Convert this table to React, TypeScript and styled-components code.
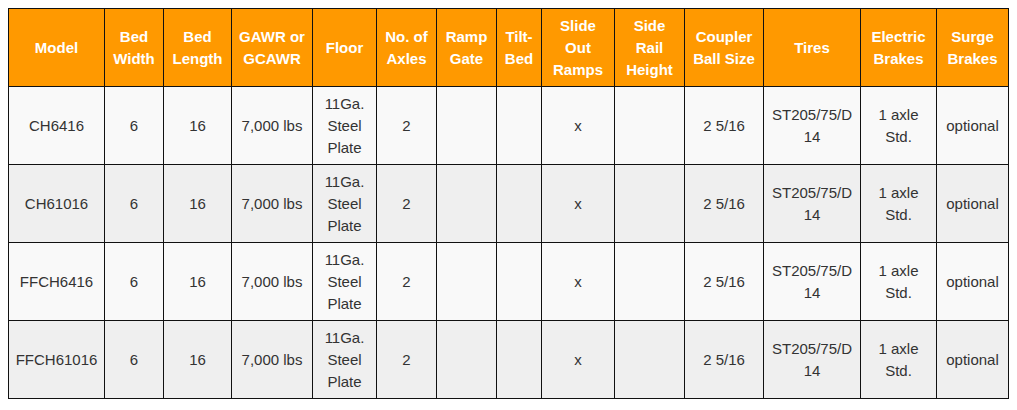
import React from 'react';
import styled, { createGlobalStyle } from 'styled-components';

const GlobalStyle = createGlobalStyle`
  body {
    margin: 8px;
    background: #ffffff;
    font-family: "Liberation Sans", Arial, sans-serif;
  }
`;

const SpecTable = styled.table`
  border-collapse: collapse;
  table-layout: fixed;
  width: 1001px;
  font-size: 15px;
  line-height: 22px;
`;

const HeadCell = styled.th`
  background-color: #ff9900;
  color: #ffffff;
  font-weight: bold;
  text-align: center;
  vertical-align: middle;
  border: 1px solid #111;
  padding: 5px 4px;
  height: 67px;
`;

const BodyRow = styled.tr<{ $shaded: boolean }>`
  background-color: ${(p) => (p.$shaded ? '#efefef' : '#f9f9f9')};
`;

const Cell = styled.td`
  color: #333333;
  text-align: center;
  vertical-align: middle;
  border: 1px solid #111;
  padding: 5px 4px;
  height: 67px;
`;

const columns = [
  { label: 'Model', width: 96 },
  { label: 'Bed Width', width: 59 },
  { label: 'Bed Length', width: 68 },
  { label: 'GAWR or GCAWR', width: 81 },
  { label: 'Floor', width: 64 },
  { label: 'No. of Axles', width: 60 },
  { label: 'Ramp Gate', width: 60 },
  { label: 'Tilt-Bed', width: 45 },
  { label: 'Slide Out Ramps', width: 73 },
  { label: 'Side Rail Height', width: 70 },
  { label: 'Coupler Ball Size', width: 79 },
  { label: 'Tires', width: 97 },
  { label: 'Electric Brakes', width: 76 },
  { label: 'Surge Brakes', width: 72 },
];

const models = ['CH6416', 'CH61016', 'FFCH6416', 'FFCH61016'];

const rowFor = (model: string) => [
  model,
  '6',
  '16',
  '7,000 lbs',
  '11Ga. Steel Plate',
  '2',
  '',
  '',
  'x',
  '',
  '2 5/16',
  'ST205/75/D 14',
  '1 axle Std.',
  'optional',
];

const App = () => {
  return (
    <>
      <GlobalStyle />
      <SpecTable>
        <colgroup>
          {columns.map((c) => (
            <col key={c.label} style={{ width: c.width }} />
          ))}
        </colgroup>
        <thead>
          <tr>
            {columns.map((c) => (
              <HeadCell key={c.label}>{c.label}</HeadCell>
            ))}
          </tr>
        </thead>
        <tbody>
          {models.map((m, i) => (
            <BodyRow key={m} $shaded={i % 2 === 1}>
              {rowFor(m).map((v, j) => (
                <Cell key={j}>{v}</Cell>
              ))}
            </BodyRow>
          ))}
        </tbody>
      </SpecTable>
    </>
  );
};

export default App;
